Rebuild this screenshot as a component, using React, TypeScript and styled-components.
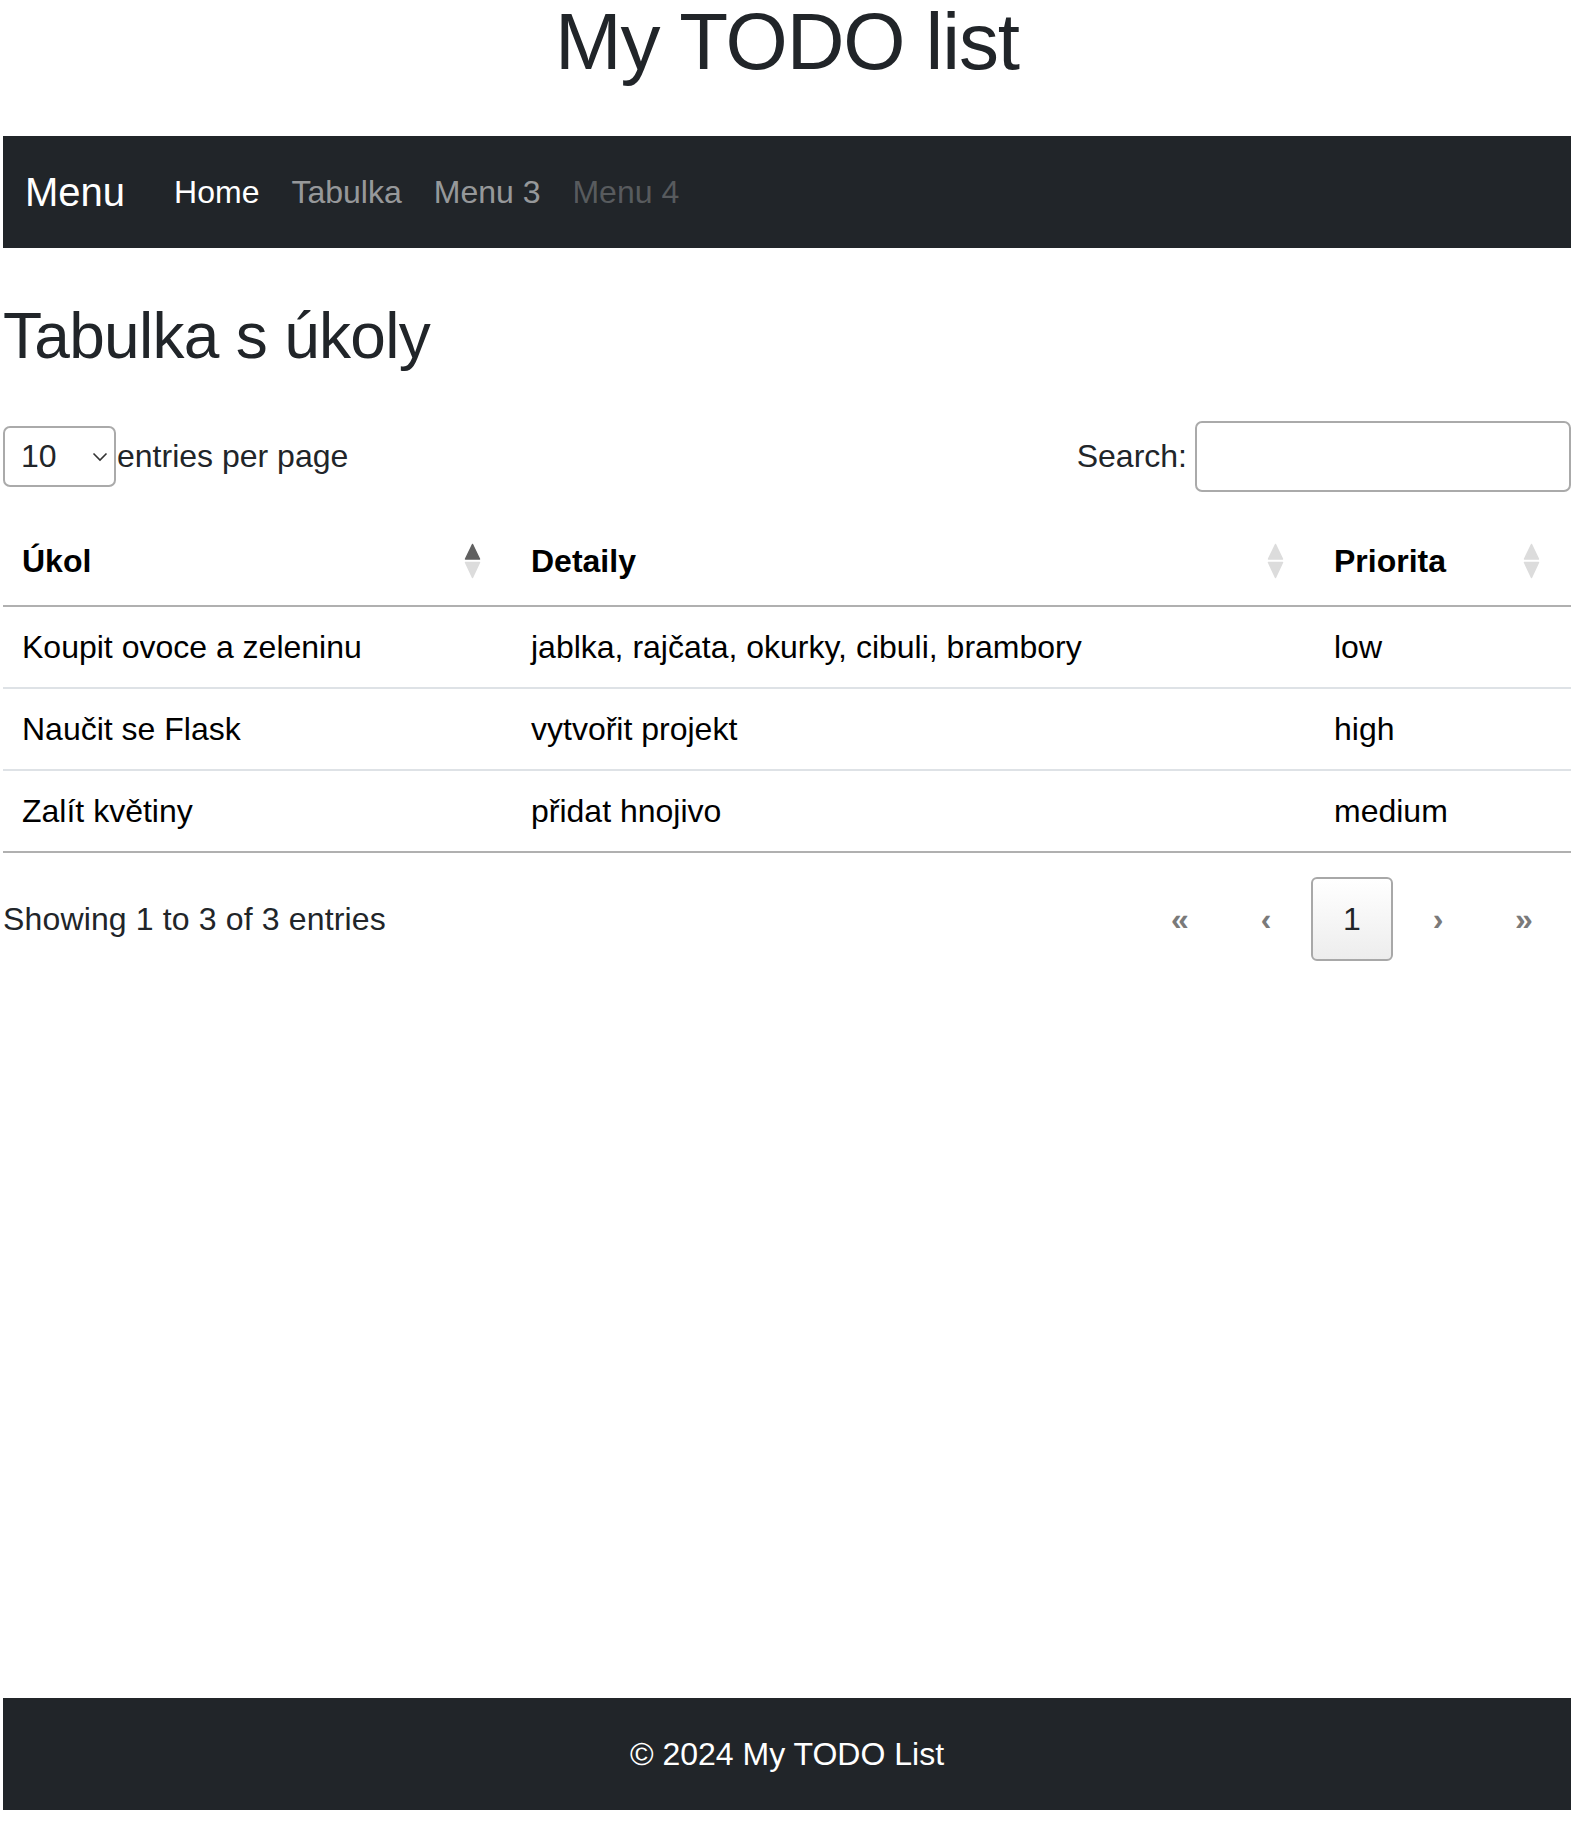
import React from 'react';
import styled, { createGlobalStyle } from 'styled-components';

const GlobalStyle = createGlobalStyle`
  *, *::before, *::after { box-sizing: border-box; }
  html, body { margin: 0; padding: 0; background: #fff; }
  body {
    font-family: "Liberation Sans", Arial, sans-serif;
    font-size: 32px;
    line-height: 1.5;
    color: #212529;
  }
`;

const Page = styled.div`
  min-height: calc(100vh - 14px);
  display: flex;
  flex-direction: column;
  padding: 0 9px 0 3px;
`;

const Title = styled.h1`
  margin: 0 0 52px;
  font-size: 80px;
  line-height: 84px;
  font-weight: 400;
  letter-spacing: -1.1px;
  text-align: center;
  color: #212529;
`;

const Navbar = styled.nav`
  height: 112px;
  background: #212529;
  display: flex;
  align-items: center;
  padding: 0 24px 0 22px;
`;

const Brand = styled.a`
  font-size: 40px;
  line-height: 60px;
  color: #fff;
  margin-right: 33px;
  text-decoration: none;
`;

const NavList = styled.ul`
  display: flex;
  list-style: none;
  margin: 0;
  padding: 0;
`;

const NavLink = styled.a<{ $state: 'active' | 'normal' | 'disabled' }>`
  display: block;
  padding: 16px 16px;
  font-size: 32px;
  line-height: 48px;
  text-decoration: none;
  color: ${(p) =>
    p.$state === 'active'
      ? '#fff'
      : p.$state === 'disabled'
      ? 'rgba(255,255,255,0.25)'
      : 'rgba(255,255,255,0.55)'};
`;

const Main = styled.main`
  padding-top: 50px;
`;

const Heading = styled.h2`
  margin: 0 0 46px;
  font-size: 64px;
  line-height: 76.8px;
  font-weight: 400;
  letter-spacing: -0.7px;
  color: #212529;
`;

const Controls = styled.div`
  display: flex;
  align-items: center;
  justify-content: space-between;
  height: 71px;
  margin-bottom: 25px;
`;

const LengthLabel = styled.label`
  display: flex;
  align-items: center;
  color: #212529;
`;

const SelectWrap = styled.span`
  position: relative;
  display: inline-block;
  width: 113px;
  height: 61px;
  margin-right: 1px;
`;

const Select = styled.select`
  appearance: none;
  -webkit-appearance: none;
  width: 100%;
  height: 100%;
  padding: 0 0 0 16px;
  font-family: inherit;
  font-size: 32px;
  color: #212529;
  background: #fff;
  border: 2px solid #aaa;
  border-radius: 7px;
  outline: none;
`;

const Chevron = styled.svg`
  position: absolute;
  right: 8px;
  top: 26px;
  pointer-events: none;
`;

const SearchLabel = styled.label`
  display: flex;
  align-items: center;
  gap: 8px;
  color: #212529;
`;

const SearchInput = styled.input`
  width: 376px;
  height: 71px;
  border: 2px solid #aaa;
  border-radius: 7px;
  font-family: inherit;
  font-size: 32px;
  padding: 0 12px;
  outline: none;
`;

const Table = styled.table`
  width: 100%;
  border-collapse: collapse;
  table-layout: fixed;
  color: #000;
  border-bottom: 2px solid #b0b0b0;
`;

const Th = styled.th`
  text-align: left;
  font-weight: 700;
  padding: 20px 31px 20px 19px;
  line-height: 48px;
  border-bottom: 2px solid #b0b0b0;
`;

const ThInner = styled.div`
  display: flex;
  align-items: center;
  justify-content: space-between;
`;

const Td = styled.td`
  padding: 16px 19px;
  line-height: 48px;
`;

const Tr = styled.tr`
  & + & > td {
    border-top: 2px solid #dee2e6;
  }
`;

const Bottom = styled.div`
  display: flex;
  align-items: center;
  justify-content: space-between;
  margin-top: 24px;
`;

const Info = styled.div`
  color: #212529;
  letter-spacing: 0.15px;
`;

const Pagination = styled.nav`
  display: flex;
  margin-right: 6px;
`;

const PageButton = styled.button<{ $current?: boolean }>`
  width: 82px;
  height: 84px;
  margin-left: 4px;
  font-family: inherit;
  font-size: 32px;
  line-height: 48px;
  padding: 0;
  border-radius: 6px;
  border: 2px solid ${(p) => (p.$current ? '#a8a8a8' : 'transparent')};
  background: ${(p) =>
    p.$current ? 'linear-gradient(to bottom, #ffffff 0%, #ededed 100%)' : 'transparent'};
  color: ${(p) => (p.$current ? '#212529' : '#7a7a7a')};
  font-weight: ${(p) => (p.$current ? 400 : 700)};
`;

const Footer = styled.footer`
  margin-top: auto;
  height: 112px;
  background: #212529;
  color: #fff;
  display: flex;
  align-items: center;
  justify-content: center;
  font-size: 32px;
  line-height: 48px;
`;

const SortIcon: React.FC<{ up?: boolean }> = ({ up }) => (
  <svg width="17" height="36" viewBox="0 0 17 36" aria-hidden>
    <polygon
      points="8.5,1.5 15.5,16 1.5,16"
      fill={up ? '#606060' : '#dcdcdc'}
      stroke={up ? '#606060' : '#dcdcdc'}
      strokeWidth="1.5"
      strokeLinejoin="round"
    />
    <polygon
      points="1.5,19.5 15.5,19.5 8.5,34.5"
      fill="#dcdcdc"
      stroke="#dcdcdc"
      strokeWidth="1.5"
      strokeLinejoin="round"
    />
  </svg>
);

const rows = [
  { task: 'Koupit ovoce a zeleninu', detail: 'jablka, rajčata, okurky, cibuli, brambory', prio: 'low' },
  { task: 'Naučit se Flask', detail: 'vytvořit projekt', prio: 'high' },
  { task: 'Zalít květiny', detail: 'přidat hnojivo', prio: 'medium' },
];

export default function App() {
  return (
    <>
      <GlobalStyle />
      <Page>
        <Title>My TODO list</Title>
        <Navbar>
          <Brand href="#">Menu</Brand>
          <NavList>
            <li><NavLink href="#" $state="active">Home</NavLink></li>
            <li><NavLink href="#" $state="normal">Tabulka</NavLink></li>
            <li><NavLink href="#" $state="normal">Menu 3</NavLink></li>
            <li><NavLink $state="disabled">Menu 4</NavLink></li>
          </NavList>
        </Navbar>
        <Main>
          <Heading>Tabulka s úkoly</Heading>
          <Controls>
            <LengthLabel>
              <SelectWrap>
                <Select defaultValue="10">
                  <option value="5">5</option>
                  <option value="10">10</option>
                  <option value="15">15</option>
                  <option value="20">20</option>
                </Select>
                <Chevron width="16" height="10" viewBox="0 0 16 10">
                  <polyline points="1.5,1.5 8,8 14.5,1.5" fill="none" stroke="#333" strokeWidth="1.6" />
                </Chevron>
              </SelectWrap>
              entries per page
            </LengthLabel>
            <SearchLabel>
              Search:
              <SearchInput type="search" />
            </SearchLabel>
          </Controls>
          <Table>
            <colgroup>
              <col style={{ width: 509 }} />
              <col style={{ width: 803 }} />
              <col />
            </colgroup>
            <thead>
              <tr>
                <Th><ThInner><span>Úkol</span><SortIcon up /></ThInner></Th>
                <Th><ThInner><span>Detaily</span><SortIcon /></ThInner></Th>
                <Th><ThInner><span>Priorita</span><SortIcon /></ThInner></Th>
              </tr>
            </thead>
            <tbody>
              {rows.map((r) => (
                <Tr key={r.task}>
                  <Td>{r.task}</Td>
                  <Td>{r.detail}</Td>
                  <Td>{r.prio}</Td>
                </Tr>
              ))}
            </tbody>
          </Table>
          <Bottom>
            <Info>Showing 1 to 3 of 3 entries</Info>
            <Pagination>
              <PageButton>«</PageButton>
              <PageButton>‹</PageButton>
              <PageButton $current>1</PageButton>
              <PageButton>›</PageButton>
              <PageButton>»</PageButton>
            </Pagination>
          </Bottom>
        </Main>
        <Footer>© 2024 My TODO List</Footer>
      </Page>
    </>
  );
}
